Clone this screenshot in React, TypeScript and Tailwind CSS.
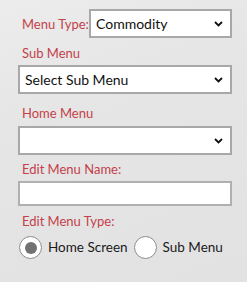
import { useState } from 'react'

function Chevron() {
  return (
    <svg width="9" height="6" viewBox="0 0 9 6" className="shrink-0">
      <path d="M1 1 L4.5 4.5 L8 1" fill="none" stroke="#111" strokeWidth="1.8" />
    </svg>
  )
}

function SelectBox({ value, className = '' }: { value: string; className?: string }) {
  return (
    <div
      className={`flex h-[29px] items-center justify-between border-2 border-[#a8a8a8] bg-white pl-[5px] pr-[7px] text-[14px] whitespace-nowrap text-[#111] ${className}`}
    >
      <span>{value}</span>
      <Chevron />
    </div>
  )
}

function Label({ children, className = '' }: { children: string; className?: string }) {
  return (
    <p className={`text-[13px] leading-[16px] whitespace-nowrap text-[#c43f4a] ${className}`}>{children}</p>
  )
}

function Radio({ checked, label, onClick }: { checked: boolean; label: string; onClick: () => void }) {
  return (
    <button onClick={onClick} className="flex shrink-0 items-center gap-[6px]">
      <span className="flex h-[23px] w-[23px] items-center justify-center rounded-full border border-[#8c8c8c] bg-white">
        {checked && <span className="h-[12px] w-[12px] rounded-full bg-[#727272]" />}
      </span>
      <span className="text-[13.5px] whitespace-nowrap text-[#1a1a1a]">{label}</span>
    </button>
  )
}

export default function App() {
  const [menuType, setMenuType] = useState<'home' | 'sub'>('home')

  return (
    <div
      className="h-[282px] w-[247px] overflow-hidden bg-[linear-gradient(160deg,#ececec_0%,#e5e5e5_40%,#e2e2e2_100%)] pl-[18px] pr-[15px] pt-[9px]"
      style={{ fontFamily: 'Lato, "Open Sans", sans-serif' }}
    >
      {/* Menu type */}
      <div className="flex items-center">
        <Label className="pl-[4px]">Menu Type:</Label>
        <SelectBox value="Commodity" className="ml-auto w-[143px]" />
      </div>

      <Label className="mt-[7px] pl-[4px]">Sub Menu</Label>
      <SelectBox value="Select Sub Menu" className="mt-[4px]" />

      <Label className="mt-[11px] pl-[4px]">Home Menu</Label>
      <SelectBox value="" className="mt-[5px]" />

      <Label className="mt-[6px] pl-[4px]">Edit Menu Name:</Label>
      <div className="mt-[4px] h-[25px] border-2 border-[#b0b0b0] bg-white" />

      <Label className="mt-[7px] pl-[4px]">Edit Menu Type:</Label>
      <div className="mt-[7px] flex items-center gap-[6px] pl-[1px]">
        <Radio checked={menuType === 'home'} label="Home Screen" onClick={() => setMenuType('home')} />
        <Radio checked={menuType === 'sub'} label="Sub Menu" onClick={() => setMenuType('sub')} />
      </div>
    </div>
  )
}
